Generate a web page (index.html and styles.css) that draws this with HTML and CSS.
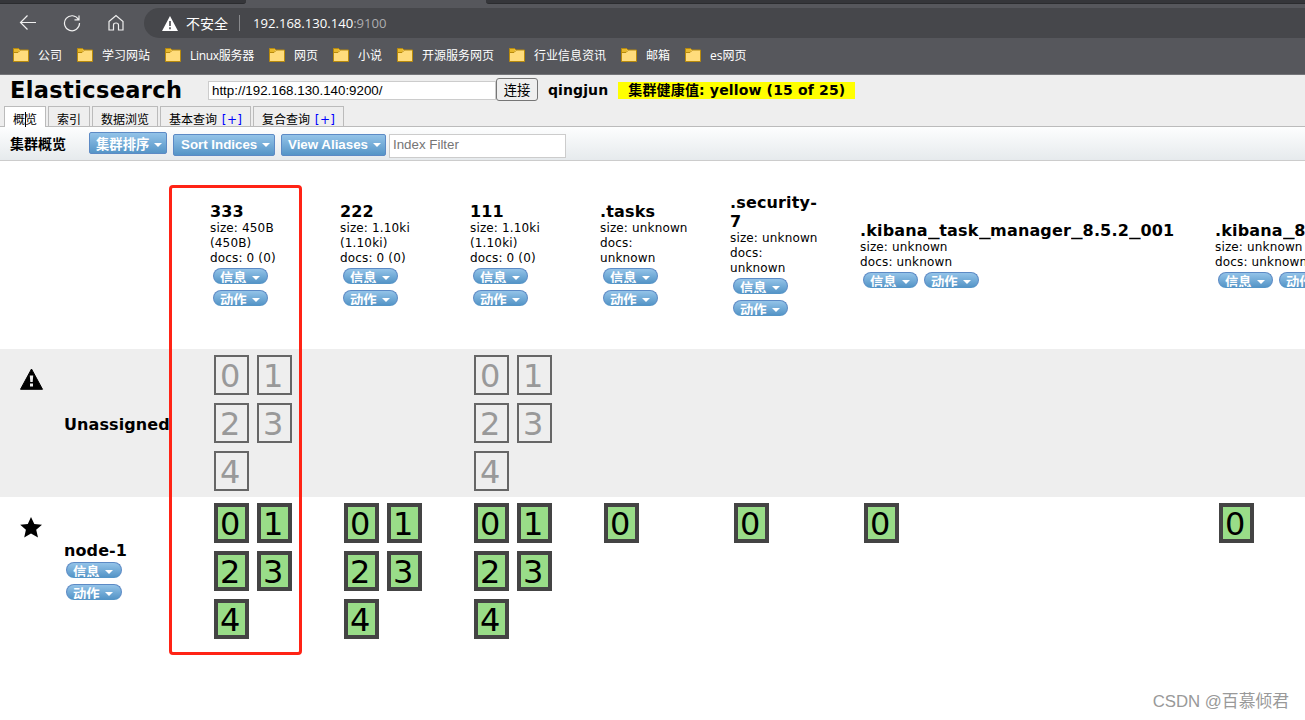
FILE: index.html
```html
<!DOCTYPE html>
<html lang="zh">
    <head>
        <meta charset="UTF-8">
        <title>elasticsearch-head</title>
        <link rel="stylesheet" href="styles.css">
    </head>
    <body>
        <div class="browser">
            <div class="tabstrip">
                <div class="tabs-left"></div>
                <div class="tabs-right"></div>
            </div>
            <div class="navbar">
                <svg class="nav-icon" width="18" height="18" viewBox="0 0 18 18"><path d="M17 8.500H2M8.500 1.500L1.500 8.500L8.500 15.500"/></svg>
                <svg class="nav-icon" width="18" height="18" viewBox="0 0 18 18"><path d="M15.500 5.500A7.500 7.500 0 1 0 16.500 9M16 1.500V5.800H11.500"/></svg>
                <svg class="nav-icon" width="18" height="18" viewBox="0 0 18 18"><path d="M2 7.500L9 1.500L16 7.500V16H11.500V11Q11.500 9 9 9Q6.500 9 6.500 11V16H2Z"/></svg>
                <div class="address">
                    <svg width="16" height="15" viewBox="0 0 16 15"><path d="M8 0L16 15H0Z" fill="#fff"/><path d="M8 5V10M8 11.300V13.200" stroke="#46474b" stroke-width="1.600"/></svg>
                    <span class="insecure">不安全</span>
                    <span class="divider"></span>
                    <span class="url">192.168.130.140<span class="port">:9100</span></span>
                </div>
            </div>
            <div class="bookmarks" id="bookmarks"></div>
        </div>

        <div class="header">
            <div class="connect">
                <h1>Elasticsearch</h1>
                <input type="text" class="uri" value="http://192.168.130.140:9200/">
                <button class="connect-btn">连接</button>
                <span class="cluster">qingjun</span>
                <span class="health">集群健康值: yellow (15 of 25)</span>
            </div>
            <div class="tabs">
                <div class="tab active">概览<span class="caret"></span></div>
                <div class="tab">索引</div>
                <div class="tab wide">数据浏览</div>
                <div class="tab query">基本查询 <a>[+]</a></div>
                <div class="tab query">复合查询 <a>[+]</a></div>
            </div>
        </div>

        <div class="toolbar">
            <span class="toolbar-title">集群概览</span>
            <button class="menu sort">集群排序<i></i></button>
            <button class="menu indices">Sort Indices<i></i></button>
            <button class="menu aliases">View Aliases<i></i></button>
            <input type="text" class="filter" placeholder="Index Filter">
        </div>

        <div class="overview">
            <div class="row head" id="head"><div></div></div>
            <div class="row unassigned" id="unassigned">
                <div class="node">
                    <svg width="24" height="24" viewBox="0 0 24 24"><path d="M11.500 2L22.500 22.300H.5Z" stroke="#000" stroke-linejoin="round"/><path d="M9.800 8.500H13.200L12.700 15H10.300ZM10 16.600H13V19.600H10Z" fill="#eee"/></svg>
                    <div class="node-info"><div class="node-name">Unassigned</div></div>
                </div>
            </div>
            <div class="row" id="node1">
                <div class="node">
                    <svg width="24" height="24" viewBox="0 0 24 24"><path d="M11 2L14.300 9L22 9.700L16.200 14.800L18 22.500L11 18.500L4.200 22.500L5.900 14.800L.2 9.700L7.800 9Z"/></svg>
                    <div class="node-info">
                        <div class="node-name">node-1</div>
                        <div class="pills">
                            <span class="pill">信息<i></i></span>
                            <span class="pill">动作<i></i></span>
                        </div>
                    </div>
                </div>
            </div>
        </div>

        <div class="highlight"></div>
        <div class="watermark">CSDN @百慕倾君</div>

        <script>
            const bookmarks = ["公司", "学习网站", "Linux服务器", "网页", "小说", "开源服务网页", "行业信息资讯", "邮箱", "es网页"];
            const indices = [
                { name: "333", size: "450B (450B)", docs: "0 (0)", missing: 5, shards: 5 },
                { name: "222", size: "1.10ki (1.10ki)", docs: "0 (0)", missing: 0, shards: 5 },
                { name: "111", size: "1.10ki (1.10ki)", docs: "0 (0)", missing: 5, shards: 5 },
                { name: ".tasks", size: "unknown", docs: "unknown", missing: 0, shards: 1 },
                { name: ".security-7", size: "unknown", docs: "unknown", missing: 0, shards: 1 },
                { name: ".kibana_task_manager_8.5.2_001", size: "unknown", docs: "unknown", missing: 0, shards: 1 },
                { name: ".kibana_8", size: "unknown", docs: "unknown", missing: 0, shards: 1 }
            ];

            function addCell(rowId, className, html) {
                const div = document.createElement("div");
                div.className = className;
                div.innerHTML = html;
                document.getElementById(rowId).appendChild(div);
            }

            function shardList(count) {
                let html = "";
                for (let i = 0; i < count; i++) {
                    html += `<span class="shard">${i}</span>`;
                }
                return html;
            }

            bookmarks.forEach(name => addCell("bookmarks", "bookmark", `
                <svg width="16" height="14" viewBox="0 0 16 14"><path d="M.5 13.500V.5H5.500L7 2H15.500V13.500Z" fill="#ffdc7c" stroke="#b88a0c"/><path d="M1 1H5.500L6.500 2L5 4H1Z" fill="#e9b92c"/><path d="M1 4.500H5L7 2.500" fill="none" stroke="#b88a0c"/></svg>
                <span>${name}</span>`));

            // One column per index: header, missing shards, shards on the node
            indices.forEach(index => {
                addCell("head", "index", `
                    <div class="index-name">${index.name.replaceAll("_", '<span class="us">_</span>')}</div>
                    <div class="stats">size: ${index.size}</div>
                    <div class="stats">docs: ${index.docs}</div>
                    <div class="pills">
                        <span class="pill">信息<i></i></span>
                        <span class="pill">动作<i></i></span>
                    </div>`);
                addCell("unassigned", "shards", shardList(index.missing));
                addCell("node1", "shards", shardList(index.shards));
            });
        </script>
    </body>
</html>
```
FILE: styles.css
```css
* {
    box-sizing: border-box;
}
body {
    margin: 0;
    height: 720px;
    overflow: hidden;
    position: relative;
    background: #fff;
    color: #000;
    font-family: "DejaVu Sans", "Noto Sans CJK SC", sans-serif;
    font-size: 12px;
}
/* Browser window */
.browser {
    height: 75px;
    background: #56575c;
    border-bottom: 1px solid #747579;
    color: #fff;
    font-family: "Open Sans", "Noto Sans CJK SC", sans-serif;
}
.tabstrip {
    height: 8px;
    display: flex;
    justify-content: space-between;
}
.tabs-left,
.tabs-right {
    height: 4px;
    background: #35363a;
    border-bottom: 1px solid #2b2c2f;
}
.tabs-left {
    width: 246px;
    border-bottom-right-radius: 3px;
}
.tabs-right {
    width: 819px;
    border-bottom-left-radius: 3px;
}
.navbar {
    height: 30px;
    display: flex;
    align-items: center;
    padding-left: 19px;
    gap: 26px;
}
.nav-icon {
    flex: none;
    fill: none;
    stroke: #f0f0f0;
    stroke-width: 1.2;
}
.address {
    flex: 1;
    height: 30px;
    margin-left: -7px;
    padding-left: 18px;
    display: flex;
    align-items: center;
    background: #46474b;
    border-radius: 15px 0 0 15px;
    font-size: 14px;
    white-space: nowrap;
}
.insecure {
    margin-left: 8px;
}
.divider {
    width: 1px;
    height: 16px;
    margin: 0 13px 0 11px;
    background: #88898c;
}
.url {
    font-size: 13.1px;
}
.port {
    color: #adadaf;
}
.bookmarks {
    display: flex;
    gap: 15px;
    height: 34px;
    padding-left: 13px;
    align-items: center;
}
.bookmark {
    display: flex;
    align-items: center;
    gap: 9px;
    font-size: 12px;
    white-space: nowrap;
}
.bookmark:nth-child(3) {
    letter-spacing: -0.3px;
}
/* Connection header */
.header {
    height: 52px;
    background: #eee;
    border-bottom: 1px solid #bbb;
}
.connect {
    height: 31px;
    display: flex;
    align-items: center;
    padding-left: 10px;
    white-space: nowrap;
}
h1 {
    margin: -1px 0 0;
    width: 198px;
    font-size: 22.5px;
    letter-spacing: 0.35px;
    line-height: 30px;
}
.uri {
    width: 288px;
    height: 19px;
    border: 1px solid #ccc;
    padding: 0 3px;
    font: 13.333px "Liberation Sans", sans-serif;
}
.connect-btn {
    width: 42px;
    height: 23px;
    margin-top: -2px;
    padding: 0;
    border: 1px solid #767676;
    border-radius: 3px;
    background: #efefef;
    font: 13.333px "Noto Sans CJK SC", sans-serif;
    line-height: 20px;
}
.cluster {
    margin: -2px 0 0 10px;
    font-size: 14px;
    font-weight: bold;
    letter-spacing: 0.1px;
}
.health {
    width: 237px;
    height: 17px;
    margin: -1px 0 0 10px;
    padding-left: 10px;
    background: #ff0;
    font-size: 14px;
    font-weight: bold;
    letter-spacing: 0.16px;
    line-height: 17px;
}
.tabs {
    display: flex;
    gap: 2px;
    padding-left: 4px;
}
.tab {
    position: relative;
    width: 42px;
    height: 20px;
    padding-left: 8px;
    border: 1px solid #bbb;
    border-bottom: none;
    line-height: 26px;
    white-space: nowrap;
}
.tab.active {
    height: 21px;
    background: #fff;
}
.tab.wide {
    width: 66px;
}
.tab.query {
    width: 91px;
}
.tab a {
    color: #00f;
    margin-left: 1px;
    letter-spacing: 0.4px;
}
.caret {
    position: absolute;
    left: 20px;
    top: 5px;
    width: 1px;
    height: 15px;
    background: #000;
}
/* Toolbar */
.toolbar {
    height: 34px;
    display: flex;
    align-items: center;
    padding-left: 10px;
    border-bottom: 1px solid #ccc;
    background: linear-gradient(#fdfefe, #e6eaed);
}
.toolbar-title {
    width: 79px;
    margin-top: -2px;
    font-size: 14px;
    font-weight: bold;
}
.menu {
    height: 22px;
    margin: 3px 6px 0 0;
    padding: 0 0 0 7px;
    border: 1px solid #5c8ac5;
    border-radius: 2px;
    background: linear-gradient(#93c3e8, #5595c7);
    color: #fff;
    font: bold 13.333px "Liberation Sans", "Noto Sans CJK SC", sans-serif;
    line-height: 20px;
    text-align: left;
    white-space: nowrap;
}
.menu i,
.pill i {
    display: inline-block;
    margin-left: 5px;
    border: 4px solid transparent;
    border-top-color: #fff;
    border-bottom: 0;
    vertical-align: 2px;
}
.sort {
    width: 78px;
    margin-top: -1px;
    padding: 2px 0 0 6px;
}
.indices {
    width: 102px;
}
.aliases {
    width: 105px;
    margin-right: 3px;
    padding-left: 6px;
}
.filter {
    width: 177px;
    height: 24px;
    margin-top: 5px;
    padding: 0 3px 4px;
    border: 1px solid #ccc;
    font: 13.333px "Liberation Sans", sans-serif;
}
/* Cluster overview */
.overview {
    overflow: hidden;
}
.row {
    display: grid;
    grid-template-columns: 210px repeat(5, 130px) 355px 90px;
    height: 148px;
}
.row.head {
    height: 188px;
}
.unassigned {
    background: #eee;
}
.index {
    align-self: center;
    padding: 1px 40px 0 0;
}
.index:last-child {
    padding-right: 0;
    white-space: nowrap;
}
.index-name {
    font-size: 16px;
    font-weight: bold;
    letter-spacing: 0.15px;
    line-height: 19px;
}
.us {
    display: inline-block;
    width: 11.6px;
    letter-spacing: 0;
    transform: scaleX(1.45);
    transform-origin: left;
}
.us::after {
    content: none;
}
.stats {
    letter-spacing: 0.15px;
    line-height: 15px;
}
.pills {
    display: flex;
    flex-wrap: wrap;
    column-gap: 6px;
    padding-left: 3px;
}
.index .pills {
    margin-top: -1px;
}
.index:last-child .pills {
    flex-wrap: nowrap;
}
.pill {
    flex: none;
    width: 55px;
    height: 16px;
    margin: 3px 0;
    padding-left: 6px;
    border: 1px solid #5c8ac5;
    border-bottom-color: #5595c7;
    border-radius: 8px;
    background: linear-gradient(#93c3e8, #5595c7);
    color: #fff;
    font: bold 13.333px "Noto Sans CJK SC", sans-serif;
    line-height: 18px;
    white-space: nowrap;
    overflow: hidden;
}
.pill i {
    vertical-align: 3px;
}
.shards {
    display: flex;
    flex-wrap: wrap;
    align-content: flex-start;
    gap: 8px;
    padding: 6px 30px 0 4px;
}
.shard {
    width: 35px;
    height: 40px;
    border: 4px solid #444;
    background: #9d8;
    font-size: 32px;
    line-height: 34px;
    padding-left: 2px;
}
.unassigned .shard {
    border: 2px solid #666;
    background: #eee;
    color: #999;
    line-height: 38px;
    padding-left: 4px;
}
.node {
    display: flex;
    padding: 18px 0 0 20px;
}
.node-info {
    align-self: center;
    width: 110px;
    margin-left: 20px;
    margin-top: -16px;
}
.node-name {
    font-size: 16px;
    font-weight: bold;
    letter-spacing: 0.1px;
    line-height: 19px;
}
.node .pills {
    flex-direction: column;
    margin-top: -1px;
    padding-left: 2px;
}
.node .pill {
    width: 56px;
}
/* Annotation frame and watermark */
.highlight {
    position: absolute;
    left: 169px;
    top: 185px;
    width: 133px;
    height: 470px;
    border: 3px solid #ff2315;
    border-radius: 4px;
}
.watermark {
    position: absolute;
    right: 16px;
    bottom: 6px;
    color: #999;
    font: 16.8px/24px "Liberation Sans", "Noto Sans CJK SC", sans-serif;
}
```
